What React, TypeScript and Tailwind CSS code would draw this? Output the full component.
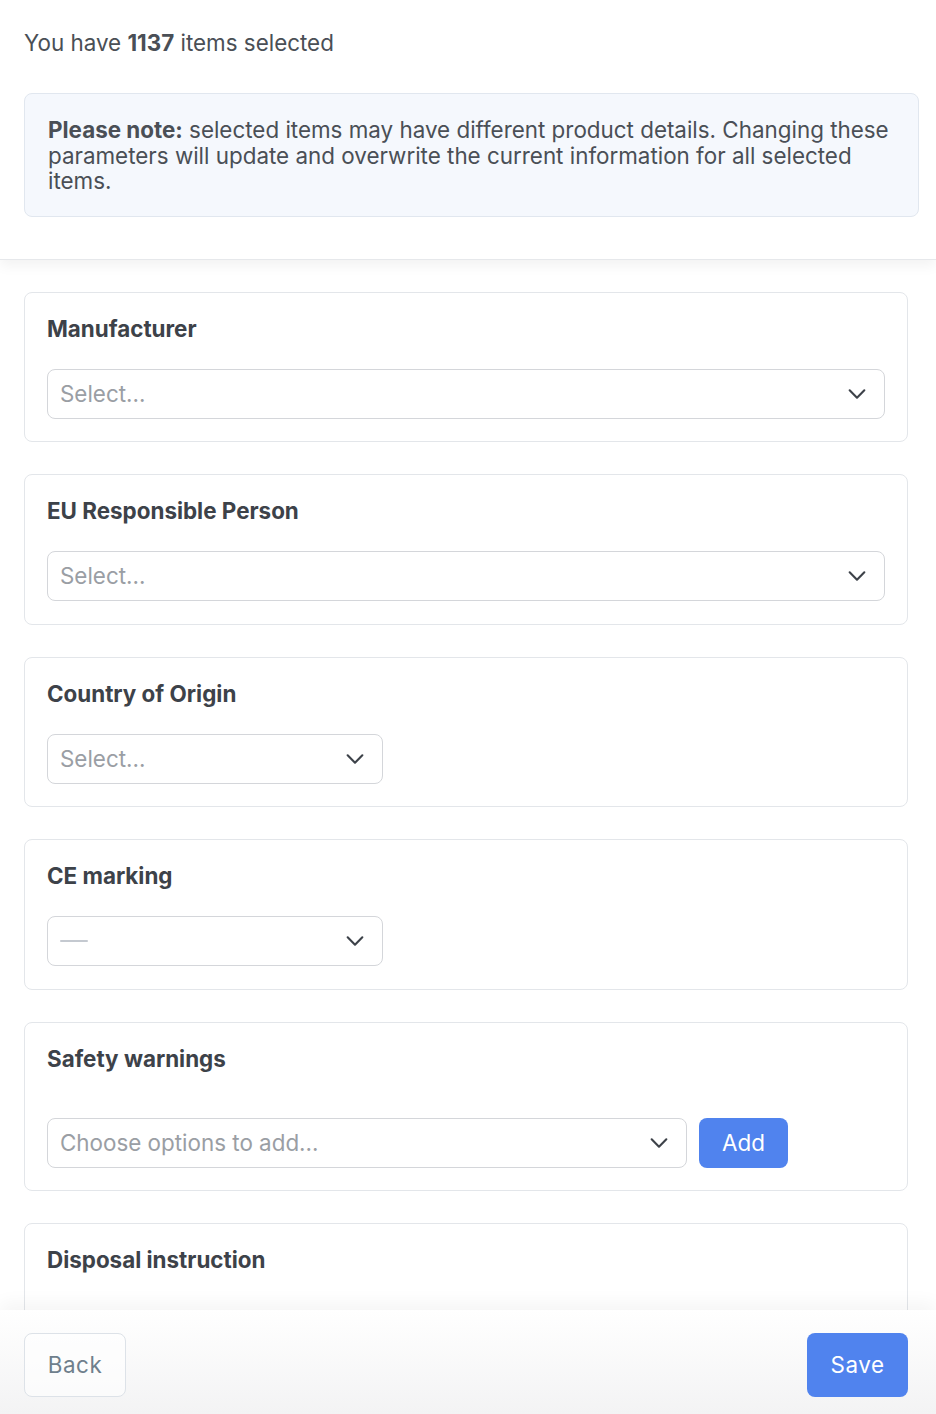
import React from "react";

const Chevron = () => (
  <svg width="22" height="22" viewBox="0 0 24 24" fill="none" stroke="#3d4249" strokeWidth="2.3" strokeLinecap="round" strokeLinejoin="round">
    <path d="M4 8l8 8 8-8" />
  </svg>
);

function SelectBox({ placeholder, width, dash }: { placeholder?: string; width: string; dash?: boolean }) {
  return (
    <div className={`${width} h-[50px] flex items-center justify-between pl-[12px] pr-[16px] border border-[#d4d6da] rounded-[8px] bg-white`}>
      {dash ? (
        <span className="block w-[28px] h-[2px] bg-[#c4c9d0] rounded"></span>
      ) : (
        <span className="text-[22.4px] text-[#9a9ea4]">{placeholder}</span>
      )}
      <Chevron />
    </div>
  );
}

function Card({ title, children, gap = "mt-[26px]" }: { title: string; children?: React.ReactNode; gap?: string }) {
  return (
    <div className="border border-[#e3e6ea] rounded-[8px] px-[22px] pt-[22px] pb-[22.5px] bg-white">
      <h3 className="text-[22.4px] leading-[28px] font-bold text-[#3d4249]">{title}</h3>
      {children && <div className={gap}>{children}</div>}
    </div>
  );
}

export default function App() {
  return (
    <div className="h-[1414px] flex flex-col bg-white overflow-hidden" style={{ fontFamily: "Inter, 'Noto Sans', sans-serif" }}>
      {/* header */}
      <div className="relative z-10 pl-[24px] pr-[17px] pt-[28px] pb-[42px] border-b border-[#e6e8eb] shadow-[0_6px_12px_rgba(0,0,0,0.05)]">
        <p className="text-[22.4px] leading-[30px] text-[#4a4f56]">
          You have <span className="font-bold">1137</span> items selected
        </p>
        <div className="mt-[35px] bg-[#f5f8fd] border border-[#e1e7ef] rounded-[8px] px-[23px] pt-[23px] pb-[22px]">
          <p className="text-[22.4px] leading-[25.5px] text-[#4a4f56]">
            <span className="font-bold">Please note:</span> selected items may have different product details. Changing these parameters will update and overwrite the current information for all selected items.
          </p>
        </div>
      </div>

      {/* content */}
      <div className="flex-1 overflow-hidden pl-[24px] pr-[28px] pt-[32px] flex flex-col gap-[32px]">
        <Card title="Manufacturer">
          <SelectBox placeholder="Select..." width="w-full" />
        </Card>
        <Card title="EU Responsible Person">
          <SelectBox placeholder="Select..." width="w-full" />
        </Card>
        <Card title="Country of Origin">
          <SelectBox placeholder="Select..." width="w-[336px]" />
        </Card>
        <Card title="CE marking">
          <SelectBox dash width="w-[336px]" />
        </Card>
        <Card title="Safety warnings" gap="mt-[45px]">
          <div className="flex items-center gap-[12px]">
            <SelectBox placeholder="Choose options to add..." width="w-[640px]" />
            <button className="w-[89px] h-[50px] rounded-[8px] bg-[#5083ee] text-white text-[22.4px]">Add</button>
          </div>
        </Card>
        <Card title="Disposal instruction">
          <div className="h-[100px]"></div>
        </Card>
      </div>

      {/* footer */}
      <div className="relative z-10 h-[104px] shrink-0 flex items-start justify-between pl-[24px] pr-[28px] pt-[23px] bg-gradient-to-b from-white to-[#f3f3f4] shadow-[0_-8px_16px_rgba(0,0,0,0.04)]">
        <button className="w-[102px] h-[64px] rounded-[8px] border border-[#dde2e8] bg-white/60 text-[22.4px] text-[#6f7f8c] tracking-wide">Back</button>
        <button className="w-[101px] h-[64px] rounded-[8px] bg-[#5083ee] text-white text-[22.4px] tracking-wide">Save</button>
      </div>
    </div>
  );
}
